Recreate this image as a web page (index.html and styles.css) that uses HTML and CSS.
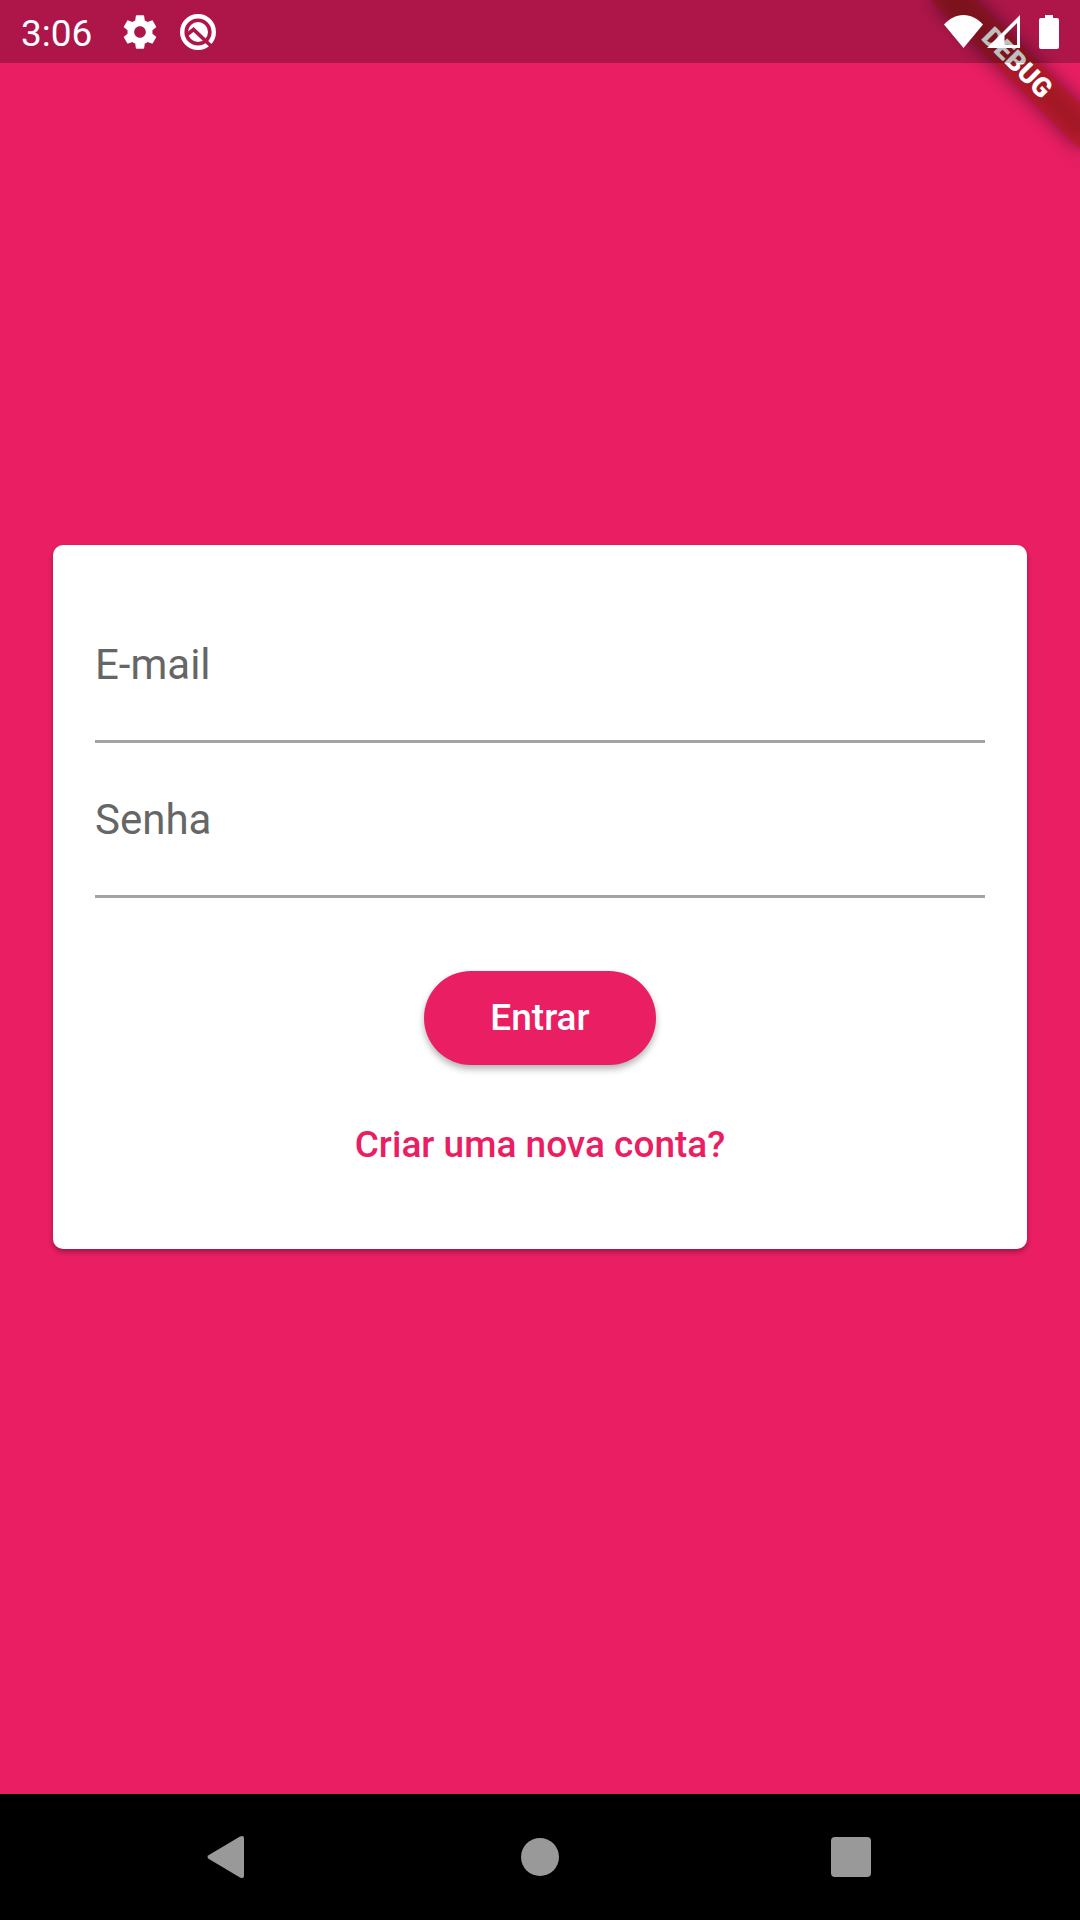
FILE: index.html
```html
<!DOCTYPE html>
<html lang="pt-BR">
<head>
<meta charset="utf-8">
<meta name="viewport" content="width=device-width, initial-scale=1">
<title>Entrar</title>
<link rel="stylesheet" href="styles.css">
</head>
<body>
<div class="screen">
  <div class="debug-banner" aria-hidden="true"><span>DEBUG</span></div>

  <header class="status-bar">
    <time class="clock">3:06</time>
    <svg class="icon-gear" viewBox="0 0 24 24" aria-hidden="true"><path d="M19.43 12.98c.04-.32.07-.64.07-.98s-.03-.66-.07-.98l2.11-1.65c.19-.15.24-.42.12-.64l-2-3.46c-.12-.22-.39-.3-.61-.22l-2.49 1c-.52-.4-1.08-.73-1.69-.98l-.38-2.65C14.46 2.18 14.25 2 14 2h-4c-.25 0-.46.18-.49.42l-.38 2.65c-.61.25-1.17.59-1.69.98l-2.49-1c-.23-.09-.49 0-.61.22l-2 3.46c-.13.22-.07.49.12.64l2.11 1.65c-.04.32-.07.65-.07.98s.03.66.07.98l-2.11 1.65c-.19.15-.24.42-.12.64l2 3.46c.12.22.39.3.61.22l2.49-1c.52.4 1.08.73 1.69.98l.38 2.65c.03.24.24.42.49.42h4c.25 0 .46-.18.49-.42l.38-2.65c.61-.25 1.17-.59 1.69-.98l2.49 1c.23.09.49 0 .61-.22l2-3.46c.12-.22.07-.49-.12-.64l-2.11-1.65zM12 15.5c-1.93 0-3.5-1.57-3.5-3.5s1.57-3.5 3.5-3.5 3.5 1.57 3.5 3.5-1.57 3.5-3.5 3.5z"/></svg>
    <svg class="icon-system" viewBox="0 0 36 36" aria-hidden="true">
      <mask id="system-cut">
        <rect width="36" height="36" fill="#fff"/>
        <path d="M6 21.500L13.500 15.500L32 33" fill="none" stroke="#000" stroke-width="3.600"/>
      </mask>
      <g mask="url(#system-cut)">
        <circle class="ring" cx="18" cy="18" r="15.800"/>
        <circle cx="18" cy="18" r="10"/>
      </g>
    </svg>
    <div class="signals">
      <svg class="icon-wifi" viewBox="0 0 39 33" aria-hidden="true"><path d="M19.500 33L0 9.500C5 4 12 0 19.500 0S34 4 39 9.500z"/></svg>
      <svg class="icon-cell" viewBox="0 0 33 33" aria-hidden="true"><path fill-rule="evenodd" d="M33 0V33H0zM30 8L17.500 20.500V30H30z"/></svg>
      <svg class="icon-battery" viewBox="0 0 20 34" aria-hidden="true"><path d="M6 0H14V3H18Q20 3 20 5V32Q20 34 18 34H2Q0 34 0 32V5Q0 3 2 3H6z"/></svg>
    </div>
  </header>

  <main class="content">
    <form class="card">
      <div class="field">
        <label for="email">E-mail</label>
        <input id="email" type="email">
      </div>
      <div class="field">
        <label for="senha">Senha</label>
        <input id="senha" type="password">
      </div>
      <button class="submit" type="button">Entrar</button>
      <a class="signup" href="#">Criar uma nova conta?</a>
    </form>
  </main>

  <nav class="nav-bar">
    <button type="button" aria-label="Voltar"><svg viewBox="0 0 44 44"><path d="M2.500 20.200L34 1.500Q38 0 38 3V41Q38 44 34 42.500L2.500 23.800Q.5 22 2.500 20.200z"/></svg></button>
    <button type="button" aria-label="Início"><svg viewBox="0 0 44 44"><circle cx="22" cy="22" r="19"/></svg></button>
    <button type="button" aria-label="Recentes"><svg viewBox="0 0 44 44"><rect x="1" y="2" width="40" height="40" rx="4"/></svg></button>
  </nav>
</div>
</body>
</html>
```

FILE: styles.css
```css
:root {
  --pink: #e91e63;
}

* {
  box-sizing: border-box;
}

body {
  margin: 0;
  font-family: Roboto, "Liberation Sans", sans-serif;
}

.screen {
  position: relative;
  display: flex;
  flex-direction: column;
  min-height: 100vh;
  overflow: hidden;
  background: var(--pink);
}

/* Status bar, drawn translucent over the content */
.status-bar {
  position: absolute;
  inset: 0 0 auto 0;
  display: flex;
  align-items: center;
  height: 63px;
  padding: 0 21px;
  background: rgba(0, 0, 0, .25);
  color: #fff;
}

.status-bar svg {
  fill: currentColor;
}

.clock {
  padding-top: 4px;
  font-size: 37px;
  line-height: 44px;
}

.icon-gear {
  width: 40px;
  height: 40px;
  margin-left: 28px;
}

.icon-system {
  width: 36px;
  height: 36px;
  margin-left: 20px;
}

.icon-system .ring {
  fill: none;
  stroke: currentColor;
  stroke-width: 4.4;
}

.signals {
  display: flex;
  align-items: center;
  margin-left: auto;
}

.icon-wifi {
  width: 39px;
  height: 33px;
}

.icon-cell {
  width: 33px;
  height: 33px;
  margin: 0 19px 0 4px;
}

.icon-battery {
  width: 20px;
  height: 34px;
}

/* Corner ribbon */
.debug-banner {
  position: absolute;
  top: 74px;
  right: -105px;
  width: 210px;
  height: 31px;
  transform: rotate(45deg);
  transform-origin: 50% -74px;
  color: #fff;
  font-size: 27px;
  font-weight: 900;
  line-height: 31px;
  text-align: center;
}

.debug-banner::before {
  content: "";
  position: absolute;
  inset: 0;
  background: rgba(0, 0, 0, .5);
  filter: blur(10px);
}

.debug-banner span {
  position: relative;
  display: block;
  background: rgba(183, 28, 28, .63);
}

/* Login card */
.content {
  flex: 1;
  display: flex;
  flex-direction: column;
  justify-content: center;
  padding: 0 53px;
}

.card {
  display: flex;
  flex-direction: column;
  align-items: center;
  padding: 43px 42px 82px;
  border-radius: 10px;
  background: #fff;
  box-shadow: 0 3px 5px rgba(0, 0, 0, .3);
}

.field {
  display: grid;
  width: 100%;
}

.field label,
.field input {
  grid-area: 1 / 1;
}

.field label {
  align-self: start;
  justify-self: start;
  margin-top: 53px;
  color: #666;
  font-size: 42px;
  line-height: 48px;
}

.field input {
  width: 100%;
  height: 155px;
  padding: 53px 0;
  border: 0;
  border-bottom: 3px solid #a3a3a3;
  outline: 0;
  background: transparent;
  font: 42px/48px Roboto, "Liberation Sans", sans-serif;
}

.submit {
  height: 94px;
  margin-top: 73px;
  padding: 0 66px;
  border: 0;
  border-radius: 48px;
  background: var(--pink);
  box-shadow: 0 4px 7px rgba(0, 0, 0, .3);
  color: #fff;
  font: 500 37px/44px Roboto, "Liberation Sans", sans-serif;
}

.signup {
  margin-top: 58px;
  color: var(--pink);
  font-size: 37px;
  font-weight: 500;
  line-height: 44px;
  text-decoration: none;
}

/* System navigation */
.nav-bar {
  display: flex;
  align-items: center;
  justify-content: center;
  gap: 268px;
  height: 126px;
  background: #000;
}

.nav-bar button {
  display: flex;
  padding: 0;
  border: 0;
  background: none;
}

.nav-bar svg {
  width: 44px;
  height: 44px;
  fill: #999;
}
```
